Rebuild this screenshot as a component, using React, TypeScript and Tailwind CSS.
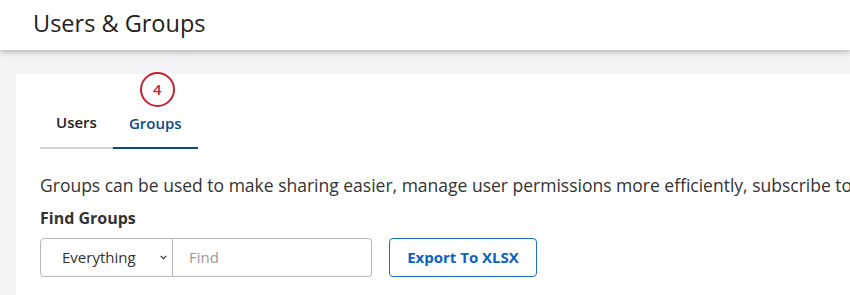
import React, { useState } from 'react';

type TabKey = 'users' | 'groups';

export default function App() {
  const [activeTab, setActiveTab] = useState<TabKey>('groups');

  const tabClass = (tab: TabKey) =>
    `px-4 pt-0 pb-[14px] text-[15px] leading-5 font-semibold border-b-2 ${
      activeTab === tab ? 'text-[#0b4a8b] border-[#0b4a8b]' : 'text-[#222] border-[#d4d4d4]'
    }`;

  return (
    <div className="min-h-screen bg-[#f4f4f6] font-['Open_Sans',sans-serif] overflow-hidden">
      {/* header */}
      <header className="relative z-10 h-[50px] bg-white pl-[33px] flex items-center shadow-[0_2px_6px_rgba(0,0,0,0.28)]">
        <h1 className="text-[23.5px] text-[#222] leading-none pb-[2px]">Users &amp; Groups</h1>
      </header>

      <main className="pt-6 pl-4">
        <section className="bg-white pl-6 pt-[37px] pb-6 min-h-[221px]">
          {/* tabs */}
          <div className="flex">
            <button onClick={() => setActiveTab('users')} className={tabClass('users')}>
              Users
            </button>
            <div className="relative">
              <span className="absolute left-[27px] top-[-39px] w-[35px] h-[35px] rounded-full border-2 border-[#c8202f] text-[#c8202f] text-[15px] font-semibold flex items-center justify-center">
                4
              </span>
              <button onClick={() => setActiveTab('groups')} className={tabClass('groups')}>
                Groups
              </button>
            </div>
          </div>

          <p className="mt-6 text-[17.5px] leading-6 text-[#333] whitespace-nowrap">
            Groups can be used to make sharing easier, manage user permissions more efficiently, subscribe to groups
          </p>

          <h2 className="mt-[11px] text-[16px] leading-5 font-bold text-[#333]">Find Groups</h2>

          <div className="mt-[10px] flex items-center">
            <div className="flex h-[39px]">
              <div className="w-[133px] border border-[#b8b8b8] rounded-l-[4px] flex items-center pl-[21px] pr-[5px] text-[15px] text-[#333]">
                <span className="flex-1">Everything</span>
                <svg width="7" height="5" viewBox="0 0 7 5" fill="none">
                  <path d="M0.7 0.8l2.8 2.8 2.8-2.8" stroke="#333" strokeWidth="1.2" />
                </svg>
              </div>
              <input
                placeholder="Find"
                className="w-[199px] border border-l-0 border-[#b8b8b8] rounded-r-[4px] pl-4 text-[15px] text-[#333] placeholder:text-[#999] outline-none"
              />
            </div>
            <button className="ml-[17px] h-[39px] w-[148px] border border-[#1a6fcf] rounded-[4px] text-[15px] font-bold text-[#0b62c4]">
              Export To XLSX
            </button>
          </div>
        </section>
      </main>
    </div>
  );
}
